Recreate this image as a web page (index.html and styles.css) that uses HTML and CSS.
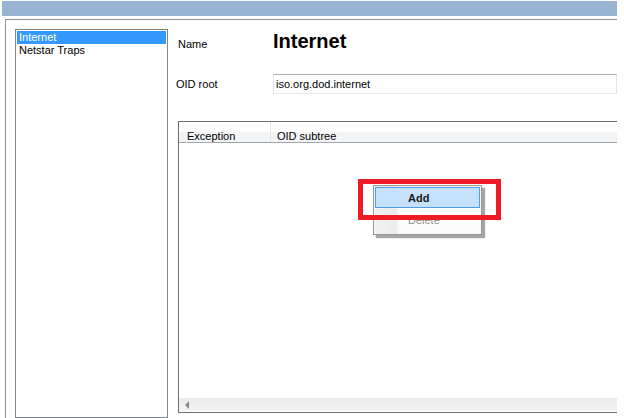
FILE: index.html
```html
<!DOCTYPE html>
<html>
<head>
<meta charset="utf-8">
<link rel="stylesheet" href="styles.css">
</head>
<body>
<div class="titlebar"></div>
<div class="frame">
  <div class="listbox">
    <div class="item selected">Internet</div>
    <div class="item">Netstar Traps</div>
  </div>
  <div class="pane">
    <div class="name-row">
      <span class="label">Name</span>
      <span class="title">Internet</span>
    </div>
    <div class="oid-row">
      <span class="label oid-label">OID root</span>
      <div class="textbox">iso.org.dod.internet</div>
    </div>
    <div class="listview">
      <div class="header">
        <div class="col col1">Exception</div>
        <div class="col col2">OID subtree</div>
      </div>
      <div class="lv-body"></div>
      <div class="hscroll"><span class="arrow-left"></span></div>
    </div>
  </div>
</div>
<div class="menu">
  <div class="menu-item hot">Add</div>
  <div class="menu-item disabled">Delete</div>
</div>
<div class="annotation"></div>
</body>
</html>
```
FILE: styles.css
```css
html, body {
  margin: 0;
  padding: 0;
}
body {
  width: 624px;
  height: 418px;
  overflow: hidden;
  background: #ffffff;
  font-family: "Liberation Sans", Arial, sans-serif;
  font-size: 11px;
  color: #000;
  position: relative;
}
.titlebar {
  margin: 1px 7px 0 2px;
  height: 15px;
  background: #98b4d3;
}
.frame {
  margin: 3px 7px 0 5px;
  border-top: 1px solid #8f8f8f;
  border-left: 1px solid #8f8f8f;
  height: 400px;
  padding: 9px 0 0 9px;
  display: flex;
  box-sizing: border-box;
}
.listbox {
  width: 149px;
  height: 385px;
  border: 1px solid #828790;
  padding: 1px;
  box-sizing: content-box;
  flex: none;
}
.listbox .item {
  height: 13px;
  line-height: 13px;
  padding-left: 2px;
  white-space: nowrap;
}
.listbox .item.selected {
  background: #3399ff;
  color: #fff;
}
.pane {
  flex: 1;
  margin-left: 10px;
  display: flex;
  flex-direction: column;
  min-width: 0;
}
.name-row {
  display: flex;
  align-items: baseline;
  height: 24px;
  line-height: 24px;
}
.label {
  width: 95px;
  flex: none;
}
.title {
  font-size: 20px;
  font-weight: bold;
}
.oid-row {
  display: flex;
  align-items: center;
  margin-top: 21px;
  margin-left: -2px;
}
.oid-label {
  width: 97px;
}
.textbox {
  flex: 1;
  height: 18px;
  line-height: 18px;
  border: 1px solid #e2e3ea;
  border-top-color: #abadb3;
  border-bottom-color: #e3e9ef;
  padding-left: 2px;
}
.listview {
  margin-top: 27px;
  height: 292px;
  border: 1px solid #6f6f6f;
  border-right: none;
  box-sizing: border-box;
  display: flex;
  flex-direction: column;
}
.header {
  display: flex;
  height: 20px;
  border-bottom: 1px solid #a2a6ab;
  background: linear-gradient(#ffffff 0, #ffffff 50%, #f3f4f6 50%, #f3f4f6 100%);
  flex: none;
}
.col {
  height: 20px;
  line-height: 28px;
  white-space: nowrap;
}
.col1 {
  width: 83px;
  padding-left: 8px;
  border-right: 1px solid #e3e5e7;
}
.col2 {
  padding-left: 6px;
}
.lv-body {
  flex: 1;
}
.hscroll {
  height: 13px;
  background: linear-gradient(#eaeaea, #f4f4f4);
  flex: none;
  display: flex;
  align-items: center;
  padding-left: 6px;
  margin-bottom: 1px;
}
.arrow-left {
  width: 0;
  height: 0;
  border-top: 4px solid transparent;
  border-bottom: 4px solid transparent;
  border-right: 4px solid #8a8a8a;
}
.menu {
  position: absolute;
  left: 373px;
  top: 185px;
  width: 105px;
  height: 46px;
  border: 1px solid #979797;
  background: linear-gradient(90deg, #fbfbfb 0, #f1f1f1 2px, #ebebeb 22px, #fbfbfb 25px, #fbfbfb 100%);
  box-shadow: 3px 3px 1px rgba(0, 0, 0, 0.35);
  padding: 1px;
  box-sizing: content-box;
}
.menu-item {
  height: 21px;
  line-height: 21px;
  padding-left: 33px;
  box-sizing: border-box;
}
.menu-item.hot {
  background: #c6e1fc;
  border: 1px solid #4c9ef2;
  font-weight: bold;
  color: #1a1a1a;
  padding-left: 32px;
}
.menu-item.disabled {
  color: #8d8d8d;
  margin-top: 2px;
}
.annotation {
  position: absolute;
  left: 358px;
  top: 179px;
  width: 143px;
  height: 41px;
  border: 5px solid #ed1c24;
  box-sizing: border-box;
}
```
